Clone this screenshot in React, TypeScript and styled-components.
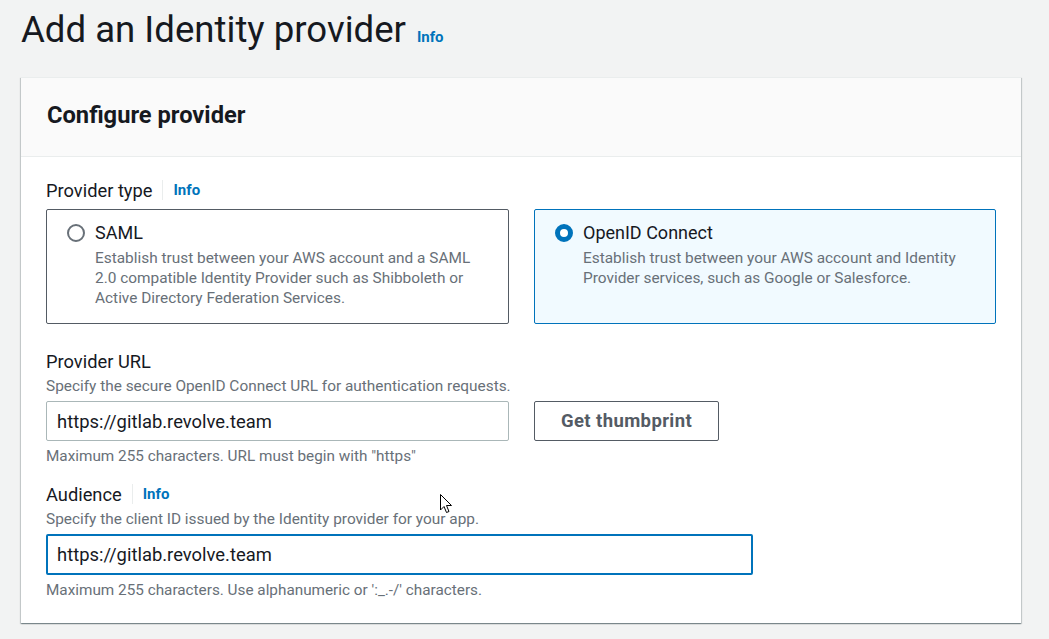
import styled, { createGlobalStyle } from "styled-components";

const GlobalStyle = createGlobalStyle`
  html, body {
    margin: 0;
    padding: 0;
    background: #f2f3f3;
    font-family: Roboto, "Liberation Sans", Arial, sans-serif;
    color: #16191f;
  }
  * {
    box-sizing: border-box;
  }
`;

const Page = styled.div`
  position: relative;
  width: 1049px;
  height: 639px;
  overflow: hidden;
  padding: 0 28px 0 21px;
`;

const TitleRow = styled.div`
  display: flex;
  align-items: baseline;
  gap: 11px;
  height: 77px;
  padding-top: 8px;
`;

const Title = styled.h1`
  margin: 0;
  font-size: 36.6px;
  font-weight: 400;
  line-height: 44px;
  color: #16191f;
`;

const InfoLink = styled.a<{ size?: number }>`
  font-size: ${(p) => p.size ?? 15}px;
  font-weight: 700;
  color: #0073bb;
  text-decoration: none;
`;

const Card = styled.section`
  background: #fff;
  border-top: 1px solid #eaeded;
  box-shadow: 0 1px 1px 0 rgba(0, 28, 36, 0.3), 1px 1px 1px 0 rgba(0, 28, 36, 0.15),
    -1px 1px 1px 0 rgba(0, 28, 36, 0.15);
`;

const CardHeader = styled.header`
  background: #fafafa;
  border-bottom: 1px solid #eaeded;
  height: 79px;
  display: flex;
  align-items: center;
  padding: 0 26px 5px;
`;

const CardTitle = styled.h2`
  margin: 0;
  font-size: 23.7px;
  font-weight: 700;
  color: #16191f;
`;

const CardBody = styled.div`
  padding: 22px 25px 23px;
`;

const Field = styled.div<{ gap?: number }>`
  margin-top: ${(p) => p.gap ?? 0}px;
`;

const LabelRow = styled.div`
  display: flex;
  align-items: center;
  height: 22px;
`;

const Label = styled.span`
  font-size: 18.3px;
  color: #16191f;
`;

const Divider = styled.span`
  width: 1px;
  height: 20px;
  background: #eaeded;
  margin: 0 10px;
`;

const Description = styled.div`
  font-size: 15.4px;
  line-height: 20px;
  color: #687078;
  margin-top: 4px;
`;

const Hint = styled.div`
  font-size: 15.3px;
  line-height: 20px;
  color: #687078;
  margin-top: 5px;
`;

const Tiles = styled.div`
  display: grid;
  grid-template-columns: 463px 462px;
  gap: 25px;
  margin-top: 8px;
`;

const Tile = styled.label<{ selected?: boolean }>`
  display: flex;
  gap: 10px;
  padding: 11px 20px 14px;
  min-height: 115px;
  border: 1px solid ${(p) => (p.selected ? "#0073bb" : "#545b64")};
  border-radius: 2px;
  background: ${(p) => (p.selected ? "#f1faff" : "#fff")};
`;

const Radio = styled.span<{ checked?: boolean }>`
  flex: none;
  width: 18px;
  height: 18px;
  margin-top: 3px;
  border-radius: 50%;
  border: ${(p) => (p.checked ? "5px solid #0073bb" : "2px solid #687078")};
  background: #fff;
`;

const TileText = styled.div`
  display: flex;
  flex-direction: column;
`;

const TileTitle = styled.span`
  font-size: 18px;
  line-height: 24px;
  color: #16191f;
`;

const TileDesc = styled.span`
  font-size: 15.4px;
  line-height: 20px;
  margin-top: 3px;
  color: #687078;
`;

const InputRow = styled.div`
  display: flex;
  gap: 25px;
  margin-top: 5px;
`;

const Input = styled.input<{ width: number; focused?: boolean }>`
  width: ${(p) => p.width}px;
  height: ${(p) => (p.focused ? 41 : 40)}px;
  padding: 0 ${(p) => (p.focused ? 9 : 10)}px;
  font-family: inherit;
  font-size: 18.4px;
  color: #16191f;
  background: #fff;
  border: ${(p) => (p.focused ? "2px solid #0073bb" : "1px solid #aab7b8")};
  border-radius: 2px;
  outline: none;
`;

const Button = styled.button`
  height: 40px;
  width: 185px;
  font-family: inherit;
  font-size: 18.5px;
  font-weight: 700;
  letter-spacing: 0.4px;
  color: #545b64;
  background: #fff;
  border: 1px solid #545b64;
  border-radius: 2px;
`;

const Cursor = styled.svg`
  position: absolute;
  left: 440px;
  top: 494px;
`;

export default function App() {
  return (
    <>
      <GlobalStyle />
      <Page>
        <TitleRow>
          <Title>Add an Identity provider</Title>
          <InfoLink href="#">Info</InfoLink>
        </TitleRow>
        <Card>
          <CardHeader>
            <CardTitle>Configure provider</CardTitle>
          </CardHeader>
          <CardBody>
            <Field>
              <LabelRow>
                <Label>Provider type</Label>
                <Divider />
                <InfoLink href="#">Info</InfoLink>
              </LabelRow>
              <Tiles>
                <Tile>
                  <Radio />
                  <TileText>
                    <TileTitle>SAML</TileTitle>
                    <TileDesc>
                      Establish trust between your AWS account and a SAML 2.0 compatible Identity
                      Provider such as Shibboleth or Active Directory Federation Services.
                    </TileDesc>
                  </TileText>
                </Tile>
                <Tile selected>
                  <Radio checked />
                  <TileText>
                    <TileTitle>OpenID Connect</TileTitle>
                    <TileDesc>
                      Establish trust between your AWS account and Identity Provider services,
                      such as Google or Salesforce.
                    </TileDesc>
                  </TileText>
                </Tile>
              </Tiles>
            </Field>
            <Field gap={26}>
              <LabelRow>
                <Label>Provider URL</Label>
              </LabelRow>
              <Description>Specify the secure OpenID Connect URL for authentication requests.</Description>
              <InputRow>
                <Input width={463} defaultValue="https://gitlab.revolve.team" />
                <Button>Get thumbprint</Button>
              </InputRow>
              <Hint>Maximum 255 characters. URL must begin with "https"</Hint>
            </Field>
            <Field gap={17}>
              <LabelRow>
                <Label>Audience</Label>
                <Divider />
                <InfoLink href="#">Info</InfoLink>
              </LabelRow>
              <Description>Specify the client ID issued by the Identity provider for your app.</Description>
              <InputRow>
                <Input width={707} focused defaultValue="https://gitlab.revolve.team" />
              </InputRow>
              <Hint>Maximum 255 characters. Use alphanumeric or ':_.-/' characters.</Hint>
            </Field>
          </CardBody>
        </Card>
        <Cursor width="13" height="20" viewBox="0 0 13 20">
          <path d="M0.5 0.5 L0.5 16 L4 12.5 L6.5 18.5 L9 17.5 L6.5 11.5 L11.5 11.5 Z" fill="#fff" stroke="#000" strokeWidth="1" />
        </Cursor>
      </Page>
    </>
  );
}
